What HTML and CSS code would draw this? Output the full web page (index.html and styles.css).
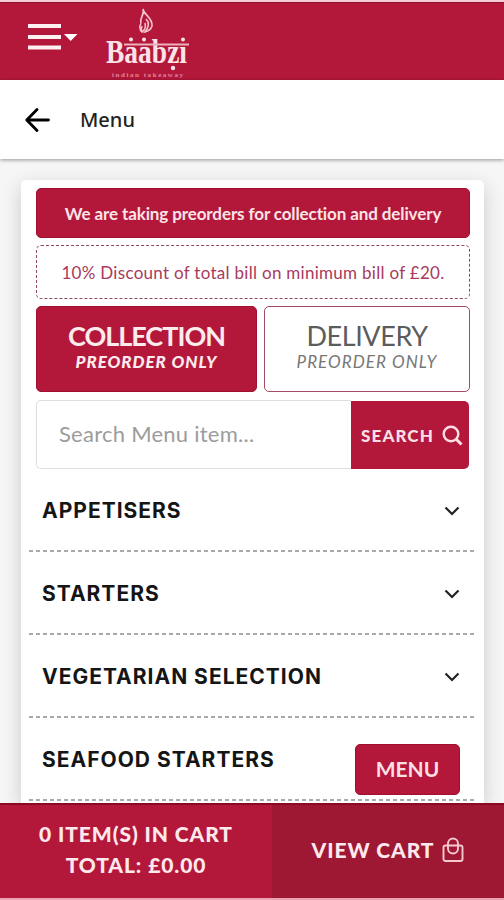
FILE: index.html
```html
<!DOCTYPE html>
<html lang="en">
<head>
    <meta charset="UTF-8">
    <meta name="viewport" content="width=device-width, initial-scale=1.0">
    <title>Baabzi - Menu</title>
    <link rel="stylesheet" href="styles.css">
</head>
<body>
    <div class="app">
        <header class="topbar">
            <button class="nav-toggle" aria-label="Open navigation">
                <svg width="50" height="28" viewBox="0 0 50 28">
                    <path d="M0 3h33M0 14h33M0 24.500h33" stroke="#fff0f2" stroke-width="4"/>
                    <path d="M36 11h13.5L42.700 18z" fill="#fff"/>
                </svg>
            </button>
            <svg class="logo" width="90" height="72" viewBox="0 0 90 72">
                <!-- flame -->
                <path d="M38 1c2 6-4 9-2 14M38 1c1 6 10 9 9 17-1 3-3 5-7 6 4-5 5-9 1-13M36 15c-2 4-1 7 1 9 3-2 4-5 3-9M37 18c-1 2-1 4 0 6" fill="none" stroke="#f6c3cd" stroke-width="1.6"/>
                <text class="logo-name" x="1" y="55" textLength="81" lengthAdjust="spacingAndGlyphs">Baabzı</text>
                <path d="M19 36.500h65" stroke="#eeb0be" stroke-width="1.800"/>
                <g fill="#fbe3e7">
                    <circle cx="26" cy="31.500" r="2"/>
                    <circle cx="39" cy="31.500" r="2"/>
                    <circle cx="78" cy="31.500" r="2"/>
                    <circle cx="68" cy="60" r="2.200"/>
                </g>
                <text class="logo-tagline" x="7" y="69" textLength="71">indian takeaway</text>
            </svg>
        </header>

        <div class="page-title">
            <svg width="26" height="26" viewBox="0 0 26 26" fill="none" stroke="#000" stroke-width="2.8" stroke-linecap="round" stroke-linejoin="round">
                <path d="M23.500 13H2.500M12 2.500L1.800 13 12 23.500"/>
            </svg>
            <h1>Menu</h1>
        </div>

        <main class="card">
            <div class="notice"><span>We are taking preorders for collection and delivery</span></div>
            <div class="discount"><span>10% Discount of total bill on minimum bill of £20.</span></div>

            <div class="order-type">
                <button class="order-btn active">
                    <span class="order-name">COLLECTION</span>
                    <span class="order-note">PREORDER ONLY</span>
                </button>
                <button class="order-btn">
                    <span class="order-name">DELIVERY</span>
                    <span class="order-note">PREORDER ONLY</span>
                </button>
            </div>

            <div class="search">
                <input type="text" placeholder="Search Menu item...">
                <button class="search-btn">
                    <span>SEARCH</span>
                    <svg width="21" height="21" viewBox="0 0 21 21" fill="none" stroke="#fbdfe4" stroke-width="2.4">
                        <circle cx="9" cy="9" r="7.300"/>
                        <path d="M14 14l5.500 5.500" stroke-width="3"/>
                    </svg>
                </button>
            </div>

            <ul class="categories">
                <li><span class="cat">APPETISERS</span><svg class="chevron" viewBox="0 0 16 10"><path d="M1.500 1.500L8 8l6.500-6.500"/></svg></li>
                <li><span class="cat">STARTERS</span><svg class="chevron" viewBox="0 0 16 10"><path d="M1.500 1.500L8 8l6.500-6.500"/></svg></li>
                <li><span class="cat">VEGETARIAN SELECTION</span><svg class="chevron" viewBox="0 0 16 10"><path d="M1.500 1.500L8 8l6.500-6.500"/></svg></li>
                <li><span class="cat">SEAFOOD STARTERS</span></li>
            </ul>
        </main>

        <button class="menu-btn">MENU</button>

        <footer class="cart-bar">
            <div class="cart-summary">
                <span>0 ITEM(S) IN CART</span>
                <span>TOTAL: £0.00</span>
            </div>
            <button class="view-cart">
                <span>VIEW CART</span>
                <svg width="22" height="26" viewBox="0 0 22 26" fill="none" stroke="#f6c9d1" stroke-width="1.900">
                    <rect x="1.500" y="8.500" width="19" height="15.500" rx="2"/>
                    <path d="M6 12V6.500a5 5 0 0 1 10 0V12M6 11.500a5 5 0 0 0 10 0"/>
                </svg>
            </button>
        </footer>
    </div>
</body>
</html>
```

FILE: styles.css
```css
* {
    box-sizing: border-box;
}

body {
    margin: 0;
    font-family: Lato, "Open Sans", sans-serif;
    background-color: #f6f6f6;
}

button {
    font-family: inherit;
    border: none;
    padding: 0;
    cursor: pointer;
}

.app {
    position: relative;
    display: flex;
    flex-direction: column;
    height: 900px;
    overflow: hidden;
}

/* header */
.topbar {
    flex: none;
    display: flex;
    height: 80px;
    padding-left: 28px;
    background-color: #b3183b;
    border-top: 2px solid #f3ccd5;
    box-shadow: inset 0 1px 0 #8e1030;
}

.nav-toggle {
    height: 28px;
    margin-top: 21px;
    background: none;
}

.logo {
    margin: 6px 0 0 27px;
    overflow: visible;
}

.logo-name {
    font-family: "Liberation Serif", serif;
    font-size: 33px;
    font-weight: bold;
    fill: #fbe3e7;
}

.logo-tagline {
    font-family: "Liberation Serif", serif;
    font-size: 7px;
    font-weight: bold;
    fill: #e08499;
}

.page-title {
    flex: none;
    position: relative;
    display: flex;
    align-items: center;
    height: 79px;
    padding-left: 25px;
    background-color: #fff;
    box-shadow: 0 1px 4px rgba(0, 0, 0, 0.4);
}

.page-title h1 {
    margin: 0 0 0 29px;
    font-family: "Noto Sans", sans-serif;
    font-size: 20px;
    font-weight: 500;
    color: #222;
}

/* card */
.card {
    flex: 1;
    margin: 21px 20px 0 21px;
    padding: 8px 14px 0 15px;
    background-color: #fff;
    border-radius: 5px 5px 0 0;
    box-shadow: 0 6px 20px rgba(0, 0, 0, 0.18);
}

.notice,
.discount {
    display: flex;
    align-items: center;
    justify-content: center;
    border-radius: 5px;
    white-space: nowrap;
}

.notice {
    height: 50px;
    background-color: #b3183b;
    border: 1px solid #a20f2f;
    color: #fbe3e7;
    font-size: 17px;
    font-weight: bold;
    letter-spacing: -0.11px;
}

.discount {
    height: 54px;
    margin-top: 7px;
    border: 1.5px dashed #8f4660;
    color: #a93a5c;
    font-size: 17px;
    letter-spacing: 0.29px;
}

.order-type {
    display: flex;
    gap: 7px;
    margin-top: 7px;
}

.order-btn {
    display: flex;
    flex-direction: column;
    align-items: center;
    width: 206px;
    height: 86px;
    padding-top: 13px;
    background-color: #fff;
    border: 1px solid #a34c68;
    border-radius: 5px;
    color: #5c5c5c;
}

.order-name {
    font-size: 27px;
    line-height: 32px;
    letter-spacing: -0.4px;
}

.order-note {
    font-size: 17px;
    font-style: italic;
    line-height: 20px;
    letter-spacing: 1.05px;
    color: #777;
}

.order-btn.active {
    width: 221px;
    background-color: #b3183b;
    border-color: #a20f2f;
    color: #fdebee;
    font-weight: bold;
}

.order-btn.active .order-name {
    letter-spacing: -1px;
}

.order-btn.active .order-note {
    font-weight: 900;
    letter-spacing: 0.95px;
    color: #fdebee;
}

.search {
    display: flex;
    height: 69px;
    margin-top: 8px;
}

.search input {
    width: 315px;
    padding: 0 0 2px 22px;
    border: 1px solid #dedede;
    border-right: none;
    border-radius: 5px 0 0 5px;
    font-family: inherit;
    font-size: 22px;
    letter-spacing: 0.25px;
}

.search input::placeholder {
    color: #9c9c9c;
}

.search-btn {
    display: flex;
    align-items: center;
    justify-content: center;
    gap: 8px;
    width: 118px;
    margin-top: 1px;
    padding-left: 4px;
    background-color: #b3183b;
    border-radius: 0 5px 5px 0;
    color: #fbdfe4;
    font-size: 17px;
    font-weight: 900;
    letter-spacing: 1.1px;
}

/* category list */
.categories {
    margin: 0 -7px;
    padding: 0;
    list-style: none;
}

.categories li {
    display: flex;
    align-items: center;
    justify-content: space-between;
    height: 83px;
    padding: 0 17px 0 13px;
    background: repeating-linear-gradient(90deg, #aaa 0 4px, #fff 4px 7px) bottom / 100% 2px no-repeat;
}

.cat {
    font-family: Inter, "Open Sans", sans-serif;
    font-size: 21px;
    font-weight: 700;
    line-height: 24px;
    letter-spacing: 1px;
    color: #151515;
}

.chevron {
    width: 16px;
    height: 10px;
    fill: none;
    stroke: #222;
    stroke-width: 2.2;
}

/* floats above the list */
.menu-btn {
    position: absolute;
    right: 44px;
    bottom: 105px;
    width: 105px;
    height: 51px;
    padding-bottom: 3px;
    background-color: #b3183b;
    border: 1px solid #a20f2f;
    border-radius: 5px;
    color: #fbdfe4;
    font-size: 21px;
    font-weight: bold;
}

/* cart */
.cart-bar {
    flex: none;
    position: relative;
    display: flex;
    height: 97px;
    border-top: 2px solid #8c0a20;
    border-bottom: 2px solid #e9a3b3;
    background-color: #b3183b;
    color: #fde8ec;
    font-size: 21px;
    font-weight: 900;
}

.cart-summary {
    display: flex;
    flex-direction: column;
    align-items: center;
    width: 272px;
    padding-top: 13px;
    line-height: 31px;
    letter-spacing: 0.9px;
}

.view-cart {
    flex: 1;
    display: flex;
    align-items: center;
    justify-content: center;
    gap: 8px;
    padding-bottom: 4px;
    background-color: #9e1733;
    color: #fde8ec;
    font-size: 21px;
    font-weight: 900;
    letter-spacing: 0.9px;
}
```
